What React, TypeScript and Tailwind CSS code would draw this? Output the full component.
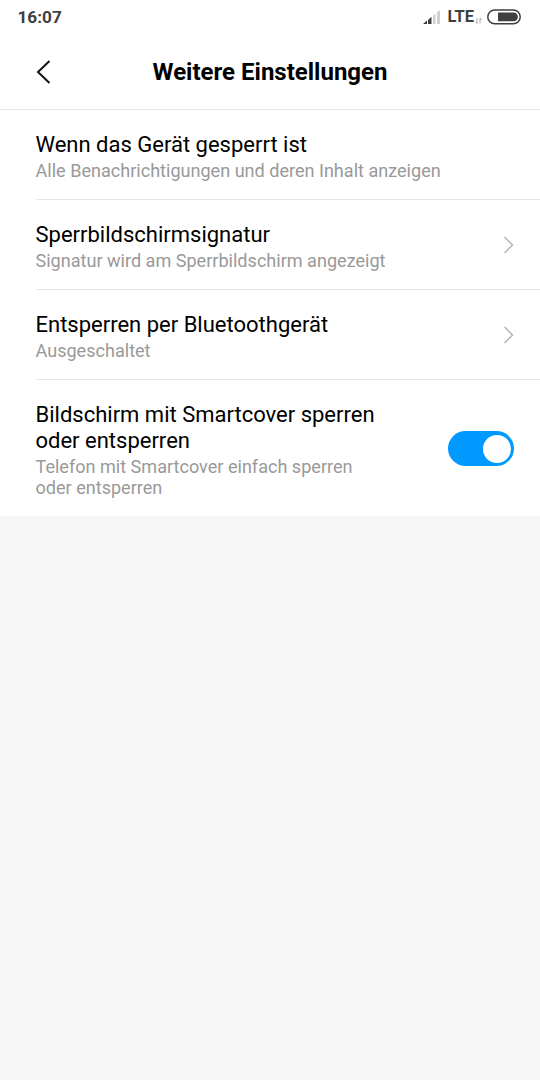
import type { ReactNode } from 'react'

function StatusBar() {
  return (
    <div className="flex h-[34px] items-center justify-between pl-[17.5px] pr-[19px]">
      <span className="mt-px text-[17.2px] font-bold text-[#3f3f3f]">16:07</span>
      <div className="flex items-center">
        <svg className="mr-[6px]" width="18" height="14" viewBox="0 0 18 14">
          <path d="M0 14 4 10.500V14z M5 10 8.500 6.800V14H5z" fill="#3f3f3f" />
          <path d="M10 5.800 12.500 3.500V14H10z M14 2.200 17 0v14h-3z" fill="#d0d0d0" />
        </svg>
        <span className="mt-px text-[16.5px] font-bold text-[#3f3f3f]">LTE</span>
        <svg className="ml-px mr-[5px] mt-1.5" width="7" height="7" viewBox="0 0 7 7" stroke="#aaa" fill="none">
          <path d="M2 1v5.500M0 4.500l2 2M5 6.500V1l2 2" />
        </svg>
        <svg width="34" height="16" viewBox="0 0 34 16">
          <rect x="0.800" y="1" width="32.400" height="13.800" rx="6.900" fill="none" stroke="#3f3f3f" strokeWidth="1.500" />
          <path d="M11 3.500h15.500a4.400 4.400 0 0 1 0 8.800H11z" fill="#3f3f3f" />
        </svg>
      </div>
    </div>
  )
}

function Chevron() {
  return (
    <svg className="-mt-[3px]" width="12" height="20" viewBox="0 0 12 20" fill="none" stroke="#b5b5b5" strokeWidth="1.5">
      <path d="M2.500 2 10.500 10 2.500 18" />
    </svg>
  )
}

function Row({ title, sub, children }: { title: ReactNode; sub: ReactNode; children?: ReactNode }) {
  return (
    <div className="ml-9 flex items-center justify-between border-b border-[#e5e5e5] pb-[18px] pr-[26px] pt-[22px] last:border-b-0">
      <div className="-ml-[0.5px]">
        <h2 className="text-[22px] leading-[26px] text-black">{title}</h2>
        <p className="mt-[2px] text-[18.07px] leading-[21px] text-[#999]">{sub}</p>
      </div>
      {children}
    </div>
  )
}

export default function App() {
  return (
    <div className="min-h-screen bg-[#f7f7f7] font-['Roboto',sans-serif]">
      <div className="bg-white">
        <StatusBar />
        <header className="grid h-[76px] grid-cols-[90px_1fr_90px] items-center border-b border-[#e5e5e5]">
          <svg className="ml-9" width="16" height="26" viewBox="0 0 16 26" fill="none" stroke="#111" strokeWidth="2">
            <path d="M13.500 2 2 13l11.500 11" />
          </svg>
          <h1 className="text-center text-[24px] font-bold text-black">Weitere Einstellungen</h1>
        </header>
        <Row title="Wenn das Gerät gesperrt ist" sub="Alle Benachrichtigungen und deren Inhalt anzeigen" />
        <Row title="Sperrbildschirmsignatur" sub="Signatur wird am Sperrbildschirm angezeigt">
          <Chevron />
        </Row>
        <Row title="Entsperren per Bluetoothgerät" sub="Ausgeschaltet">
          <Chevron />
        </Row>
        <Row
          title={<>Bildschirm mit Smartcover sperren<br />oder entsperren</>}
          sub={<>Telefon mit Smartcover einfach sperren<br />oder entsperren</>}
        >
          <div className="-mt-[3px] mr-[0.5px] flex h-[35px] w-[66px] items-center justify-end rounded-full bg-[#0099ff] pr-[3px]">
            <div className="size-[28px] rounded-full bg-white" />
          </div>
        </Row>
      </div>
    </div>
  )
}
